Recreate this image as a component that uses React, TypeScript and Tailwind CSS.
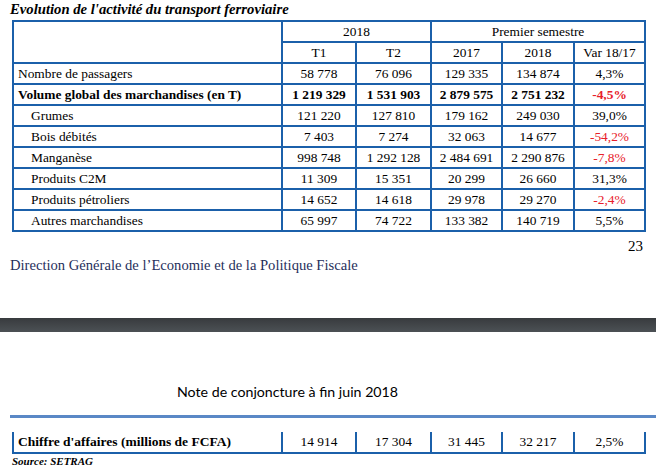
import React from 'react';

type Row = { label: string; v: string[]; bold?: boolean; indent?: boolean };

const rows: Row[] = [
  { label: 'Nombre de passagers', v: ['58 778', '76 096', '129 335', '134 874', '4,3%'] },
  { label: 'Volume global des marchandises (en T)', v: ['1 219 329', '1 531 903', '2 879 575', '2 751 232', '-4,5%'], bold: true },
  { label: 'Grumes', v: ['121 220', '127 810', '179 162', '249 030', '39,0%'], indent: true },
  { label: 'Bois débités', v: ['7 403', '7 274', '32 063', '14 677', '-54,2%'], indent: true },
  { label: 'Manganèse', v: ['998 748', '1 292 128', '2 484 691', '2 290 876', '-7,8%'], indent: true },
  { label: 'Produits C2M', v: ['11 309', '15 351', '20 299', '26 660', '31,3%'], indent: true },
  { label: 'Produits pétroliers', v: ['14 652', '14 618', '29 978', '29 270', '-2,4%'], indent: true },
  { label: 'Autres marchandises', v: ['65 997', '74 722', '133 382', '140 719', '5,5%'], indent: true },
];

const cell = 'border-2 border-[#1b60aa] p-0 h-[21px] leading-[16px]';

const Cols = () => (
  <colgroup>
    <col className="w-[269px]" />
    <col className="w-[74px]" />
    <col className="w-[75px]" />
    <col className="w-[71px]" />
    <col className="w-[72px]" />
    <col className="w-[71px]" />
  </colgroup>
);

export default function App() {
  return (
    <div className="w-[656px] h-[470px] overflow-hidden bg-white text-black font-['Liberation_Serif',serif] flex flex-col">
      <div className="h-[20px] pl-[10px] text-[14.7px] leading-[18px] font-bold italic">
        Evolution de l'activité du transport ferroviaire
      </div>

      <table className="ml-[12px] w-[632px] table-fixed border-collapse text-[13.4px]">
        <Cols />
        <tbody>
          <tr>
            <td rowSpan={2} className={cell}></td>
            <td colSpan={2} className={`${cell} text-center`}>2018</td>
            <td colSpan={3} className={`${cell} text-center`}>Premier semestre</td>
          </tr>
          <tr>
            {['T1', 'T2', '2017', '2018', 'Var 18/17'].map((h) => (
              <td key={h} className={`${cell} text-center`}>{h}</td>
            ))}
          </tr>
          {rows.map((r) => (
            <tr key={r.label} className={r.bold ? 'font-bold' : ''}>
              <td className={`${cell} ${r.indent ? 'pl-[17px]' : 'pl-[4px]'} whitespace-nowrap`}>{r.label}</td>
              {r.v.map((x, i) => (
                <td
                  key={i}
                  className={`${cell} text-center ${i === 4 && x.startsWith('-') ? 'text-[#e8202a]' : ''}`}
                >
                  {x}
                </td>
              ))}
            </tr>
          ))}
        </tbody>
      </table>

      <div className="mt-[6px] pr-[13px] text-right text-[15px] leading-[17px]">23</div>
      <div className="mt-[2px] pl-[10px] text-[14.6px] leading-[17px] text-[#1f2f5c]">
        Direction Générale de l’Economie et de la Politique Fiscale
      </div>

      <div className="mt-[44px] h-[14px] shrink-0 bg-gradient-to-b from-[#383b3e] to-[#4c5155]" />

      <div className="mt-[51px] pl-[177px] text-[14.2px] leading-[18px] font-['Lato',sans-serif]">
        Note de conjoncture à fin juin 2018
      </div>
      <div className="mt-[14px] ml-[10px] h-[3px] shrink-0 bg-[#5a88c6]" />

      <table className="mt-[14px] ml-[12px] w-[632px] table-fixed border-collapse text-[13.4px]">
        <Cols />
        <tbody>
          <tr>
            <td className="border-l-2 border-r-2 border-b-2 border-[#1b60aa] h-[21px] pl-[4px] font-bold text-[13.5px] leading-[16px] whitespace-nowrap">
              Chiffre d'affaires (millions de FCFA)
            </td>
            {['14 914', '17 304', '31 445', '32 217', '2,5%'].map((x) => (
              <td key={x} className="border-r-2 border-b-2 border-[#1b60aa] h-[21px] text-center leading-[16px]">
                {x}
              </td>
            ))}
          </tr>
        </tbody>
      </table>
      <div className="pl-[12px] pt-[1px] text-[11px] leading-[13px] font-bold italic">Source: SETRAG</div>
    </div>
  );
}
